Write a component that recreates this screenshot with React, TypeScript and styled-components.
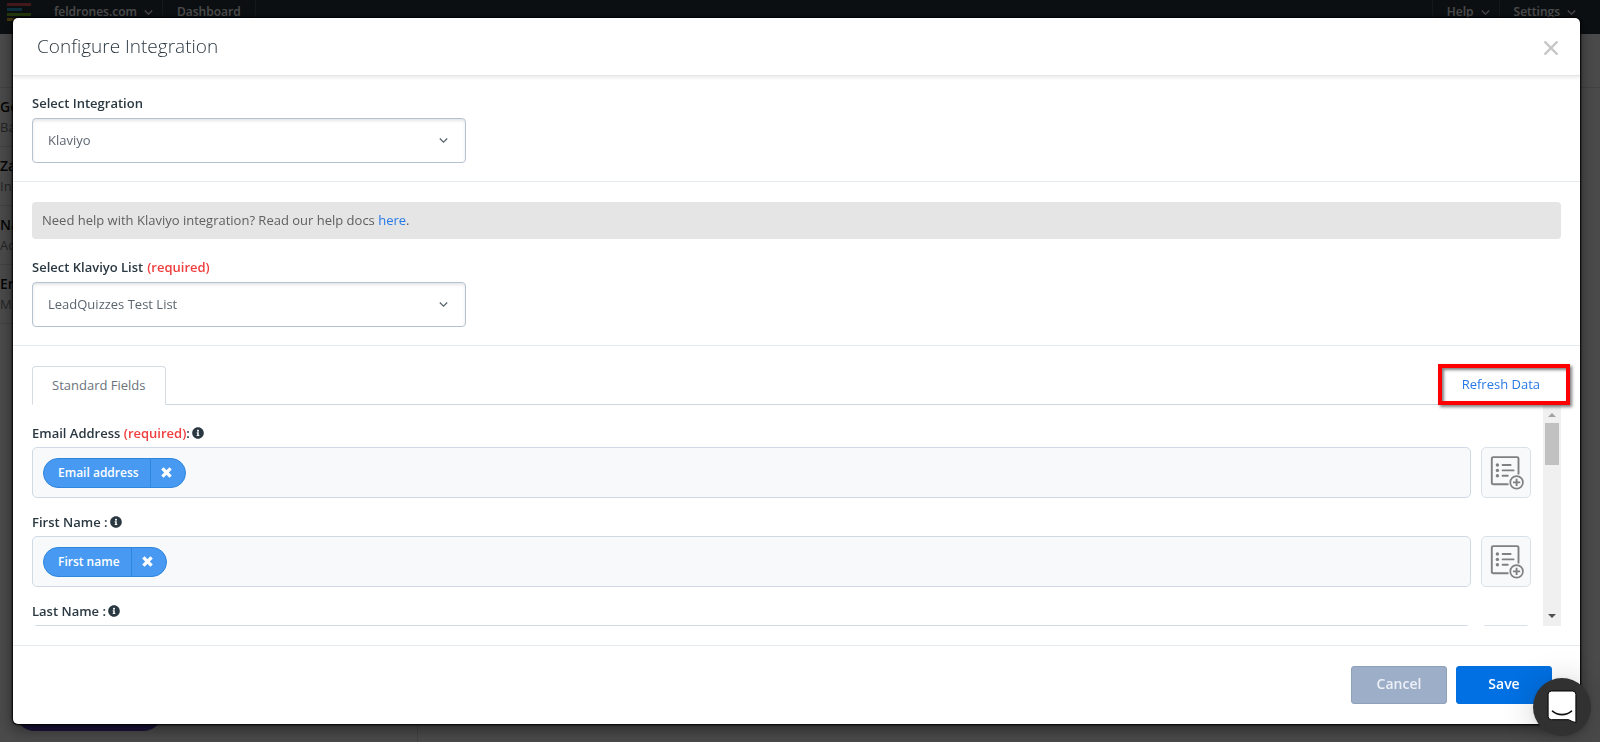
import React from "react";
import styled, { createGlobalStyle } from "styled-components";
import { FaInfoCircle } from "react-icons/fa";

const GlobalStyle = createGlobalStyle`
  *, *::before, *::after { box-sizing: border-box; }
  body {
    margin: 0;
    background: #f8f8f8;
    color: #56626a;
    font-family: "Open Sans", "Noto Sans", sans-serif;
    font-size: 13px;
    line-height: 18px;
    overflow: hidden;
  }
  button, select { font: inherit; }
  button { cursor: pointer; }
`;

/* ---------- page behind the dialog ---------- */

const Page = styled.div`
  display: flex;
  flex-direction: column;
  height: 100vh;
`;

const NavBar = styled.nav`
  display: flex;
  flex: none;
  align-items: flex-start;
  height: 34px;
  padding-right: 15px;
  background: #27343e;
`;

const Logo = styled.svg`
  flex: none;
  width: 24px;
  height: 19px;
  margin: 3px 9px 0 7px;
`;

const NavLink = styled.a<{ $menu?: boolean; $side?: "left" | "right" }>`
  display: flex;
  align-items: center;
  gap: 7px;
  height: 34px;
  padding: 0 ${(p) => (p.$menu ? 9 : 14)}px 10px 14px;
  border: 0 solid #45525c;
  border-${(p) => (p.$side === "right" ? "left" : "right")}-width: 1px;
  color: #fff;
  font-size: 12px;
  font-weight: 600;
  text-decoration: none;
`;

const NavSpacer = styled.div`
  flex: 1;
`;

const SubHeader = styled.div`
  flex: none;
  height: 54px;
  border-bottom: 1px solid #dadada;
`;

const Columns = styled.div`
  display: flex;
  flex: 1;
`;

const Sidebar = styled.aside`
  display: flex;
  flex-direction: column;
  justify-content: space-between;
  width: 418px;
  border-right: 1px solid #dadada;
`;

const LeadList = styled.ul`
  margin: 0;
  padding: 0;
  list-style: none;
`;

const Lead = styled.li`
  height: 59px;
  padding-top: 9px;
  border-bottom: 1px solid #dadada;
  color: #777;
  line-height: 20px;

  strong {
    display: block;
    color: #111;
    font-size: 14px;
    font-weight: 600;
  }
`;

const PurplePill = styled.div`
  width: 148px;
  height: 40px;
  margin: 0 0 11px 15px;
  border-radius: 20px;
  background: #5a3fbf;
`;

/* ---------- dialog ---------- */

const Overlay = styled.div`
  position: fixed;
  inset: 0;
  display: flex;
  padding: 18px 20px 18px 13px;
  background: rgba(0, 0, 0, 0.7);
`;

const Dialog = styled.section`
  display: flex;
  flex: 1;
  flex-direction: column;
  min-width: 0;
  border-radius: 5px;
  background: #fff;
  box-shadow: 0 0 2px 1px #000, 0 5px 15px rgba(0, 0, 0, 0.5);
`;

const DialogHeader = styled.header`
  display: flex;
  flex: none;
  align-items: center;
  justify-content: space-between;
  height: 58px;
  padding: 0 21px 2px 24px;
  border-bottom: 1px solid #e4e6e8;
  box-shadow: 0 2px 3px rgba(0, 0, 0, 0.08);
`;

const Title = styled.h1`
  margin: 0;
  color: #2b3740;
  font-size: 19px;
  font-weight: 300;
  line-height: 26px;
`;

const CloseButton = styled.button`
  display: flex;
  padding: 5px 0 0;
  border: 0;
  background: none;
  color: #c8c8c8;
`;

const Section = styled.div<{ $compact?: boolean }>`
  flex: none;
  padding: ${(p) => (p.$compact ? 18 : 20)}px 19px 18px;
  border-bottom: 1px solid #e4eaf0;
`;

const Label = styled.label`
  display: flex;
  align-items: center;
  gap: 4px;
  color: #2a3842;
  font-weight: 600;
`;

const FieldLabel = styled(Label).attrs({ as: "div" })`
  gap: 2px;
`;

const Required = styled.span`
  color: #f03e3e;
`;

const SelectBox = styled.div`
  display: grid;
  align-items: center;
  width: 434px;
  max-width: 100%;
  margin-top: 6px;

  > * { grid-area: 1 / 1; }
  > svg {
    justify-self: end;
    margin-right: 18px;
    pointer-events: none;
  }
`;

const Select = styled.select`
  width: 100%;
  height: 45px;
  padding: 0 40px 2px 15px;
  border: 1px solid #b5c3d1;
  border-radius: 4px;
  appearance: none;
  background: #fff;
  box-shadow: inset 0 2px 3px rgba(0, 0, 0, 0.1);
  color: #5c6670;
`;

const HelpNote = styled.p`
  margin: 0 0 19px;
  padding: 9px 10px 10px;
  border-radius: 4px;
  background: #e5e5e5;
  color: #606060;
`;

const TextLink = styled.a`
  color: #2779e6;
  text-decoration: none;
`;

const FieldsSection = styled.div`
  display: flex;
  flex: 1;
  flex-direction: column;
  min-height: 0;
  padding: 20px 19px 19px;
  border-bottom: 1px solid #e4eaf0;
`;

const TabBar = styled.div`
  display: flex;
  flex: none;
  justify-content: space-between;
  height: 39px;
  border-bottom: 1px solid #ccd6df;
`;

const Tab = styled.button`
  height: 39px;
  padding: 0 19px 2px;
  border: 1px solid #d5dbe0;
  border-bottom-color: #fff;
  border-radius: 4px 4px 0 0;
  background: #fff;
  color: #6a737b;
`;

const RefreshArea = styled.div`
  position: relative;
  display: flex;
  align-items: center;
  padding: 0 21px 3px 24px;
`;

const Highlight = styled.span`
  position: absolute;
  inset: -2px -9px -1px 0;
  z-index: 1;
  border: 4px solid #fe0000;
  box-shadow: 2px 2px 3px rgba(0, 0, 0, 0.5), inset 2px 2px 3px rgba(0, 0, 0, 0.5);
  pointer-events: none;
`;

const FieldsViewport = styled.div`
  display: flex;
  flex: 1;
  gap: 12px;
  min-height: 0;
`;

const FieldList = styled.div`
  flex: 1;
  min-width: 0;
  padding-top: 19px;
  overflow-y: auto;
  scrollbar-width: none;
`;

const FieldGroup = styled.div`
  margin-bottom: 15px;
`;

const FieldRow = styled.div`
  display: flex;
  gap: 10px;
  margin-top: 5px;
`;

const FieldBox = styled.div`
  display: flex;
  flex: 1;
  align-items: center;
  height: 51px;
  padding: 0 10px;
  border: 1px solid #cfdae4;
  border-radius: 5px;
  background: #f7f9fb;
`;

const Chip = styled.span`
  display: flex;
  height: 30px;
  border: 1px solid #2f86dd;
  border-radius: 15px;
  background: #4799f1;
  color: #fff;
  font-size: 12px;
  font-weight: 600;
  line-height: 28px;
`;

const ChipText = styled.span`
  padding: 0 11px 0 14px;
`;

const ChipRemove = styled.button`
  display: flex;
  align-items: center;
  width: 35px;
  padding: 0 0 0 10px;
  border: 0;
  border-left: 1px solid #2f86dd;
  background: none;
  color: #fff;
`;

const InsertButton = styled.button`
  display: flex;
  align-items: center;
  justify-content: center;
  width: 50px;
  height: 51px;
  padding: 0 0 0 2px;
  border: 1px solid #d8e1ea;
  border-radius: 5px;
  background: #f7f9fb;
  color: #808080;
`;

const ScrollTrack = styled.div`
  display: flex;
  flex-direction: column;
  align-items: center;
  width: 18px;
  background: #f0f0f0;
`;

const ScrollThumb = styled.div`
  width: 14px;
  height: 42px;
  margin-bottom: auto;
  background: #c1c1c1;
`;

const ScrollArrow = styled.svg`
  flex: none;
  width: 18px;
  height: 18px;
`;

const DialogFooter = styled.footer`
  display: flex;
  flex: none;
  justify-content: flex-end;
  gap: 9px;
  padding: 20px 28px 20px;
`;

const ActionButton = styled.button<{ $primary?: boolean }>`
  width: 96px;
  height: 38px;
  padding: 0 0 3px;
  border: 1px solid ${(p) => (p.$primary ? "#006fe0" : "#8ea1b9")};
  border-radius: 3px;
  background: ${(p) => (p.$primary ? "#0070e2" : "#9daec8")};
  color: ${(p) => (p.$primary ? "#fff" : "#edf1f7")};
  font-size: 14px;
  font-weight: 600;
`;

const ChatLauncher = styled.button`
  position: fixed;
  right: 9px;
  bottom: 6px;
  display: flex;
  align-items: center;
  justify-content: center;
  width: 58px;
  height: 58px;
  padding: 0;
  border: 0;
  border-radius: 50%;
  background: #313131;
  box-shadow: 0 1px 6px rgba(0, 0, 0, 0.08), 0 2px 32px rgba(0, 0, 0, 0.18);
`;

/* ---------- icons ---------- */

const Chevron = () => (
  <svg width="9" height="9" viewBox="0 0 9 9" fill="none" stroke="currentColor" strokeWidth="1.2" aria-hidden>
    <path d="M0.8 2.5 4.5 6.2 8.2 2.5" />
  </svg>
);

const CrossIcon = () => (
  <svg width="16" height="16" viewBox="0 0 16 16" stroke="currentColor" strokeWidth="2.4" strokeLinecap="round" aria-hidden>
    <path d="M2.2 2.2 13.8 13.8M13.8 2.2 2.2 13.8" />
  </svg>
);

const RemoveIcon = () => (
  <svg width="11" height="11" viewBox="0 0 11 11" stroke="currentColor" strokeWidth="3.4" aria-hidden>
    <path d="M1.4 1.4 9.6 9.6M9.6 1.4 1.4 9.6" />
  </svg>
);

const InsertFieldIcon = () => (
  <svg width="34" height="34" viewBox="0 0 34 34" fill="none" stroke="currentColor" aria-hidden>
    <path strokeWidth="1.9" d="M18.5 28.3H3.2a1.4 1.4 0 0 1-1.4-1.4V2.5a1.4 1.4 0 0 1 1.4-1.4h23.9a1.4 1.4 0 0 1 1.4 1.4v16" />
    <g fill="currentColor" stroke="none">
      <circle cx="7.4" cy="9" r="1.7" />
      <circle cx="7.4" cy="14.4" r="1.7" />
      <circle cx="7.4" cy="19.8" r="1.7" />
    </g>
    <path strokeWidth="1.9" strokeLinecap="round" d="M12.6 9h8M12.6 14.4h11M12.6 19.8h5.2" />
    <circle cx="26.6" cy="26.4" r="6.3" strokeWidth="1.7" fill="#f7f9fb" />
    <path strokeWidth="1.9" d="M26.6 22.8v7.2M23 26.4h7.2" />
  </svg>
);

const ChatIcon = () => (
  <svg width="30" height="34" viewBox="0 0 30 34" aria-hidden>
    <path
      d="M4.5 1h21a3.4 3.4 0 0 1 3.4 3.4v28.2c-2.6-.6-5-1.5-7.3-2.9H4.5A3.4 3.4 0 0 1 1.1 26.3V4.4A3.4 3.4 0 0 1 4.5 1z"
      fill="#fff"
      stroke="#000"
      strokeWidth="1"
    />
    <path d="M5.5 21.2c5.2 4.6 13.8 4.6 19 0" fill="none" stroke="#111" strokeWidth="1.6" strokeLinecap="round" />
  </svg>
);

/* ---------- data ---------- */

const leads = [
  { name: "Ge", role: "Ba" },
  { name: "Za", role: "Int" },
  { name: "Na", role: "Ad" },
  { name: "Er", role: "Ma" },
];

const fields = [
  { label: "Email Address", required: true, value: "Email address" },
  { label: "First Name", required: false, value: "First name" },
  { label: "Last Name", required: false, value: "" },
];

export default function App() {
  return (
    <>
      <GlobalStyle />
      <Page>
        <NavBar>
          <Logo viewBox="0 0 24 19" aria-hidden>
            <path d="M0 1.5h24" stroke="#e0525c" strokeWidth="3" />
            <path d="M0 6.5h15" stroke="#2f9fd0" strokeWidth="3" />
            <path d="M0 11.5h24" stroke="#76b82a" strokeWidth="3" />
            <path d="M0 16.5h13" stroke="#e8b82a" strokeWidth="3" />
          </Logo>
          <NavLink href="#account" $menu>
            <span>feldrones.com</span>
            <Chevron />
          </NavLink>
          <NavLink href="#dashboard">Dashboard</NavLink>
          <NavSpacer />
          <NavLink href="#help" $menu $side="right">
            <span>Help</span>
            <Chevron />
          </NavLink>
          <NavLink href="#settings" $menu $side="right">
            <span>Settings</span>
            <Chevron />
          </NavLink>
        </NavBar>
        <SubHeader />
        <Columns>
          <Sidebar>
            <LeadList>
              {leads.map((lead) => (
                <Lead key={lead.name}>
                  <strong>{lead.name}</strong>
                  {lead.role}
                </Lead>
              ))}
            </LeadList>
            <PurplePill />
          </Sidebar>
        </Columns>
      </Page>

      <Overlay>
        <Dialog role="dialog" aria-modal="true" aria-labelledby="dialog-title">
          <DialogHeader>
            <Title id="dialog-title">Configure Integration</Title>
            <CloseButton aria-label="Close">
              <CrossIcon />
            </CloseButton>
          </DialogHeader>

          <Section $compact>
            <Label htmlFor="integration">Select Integration</Label>
            <SelectBox>
              <Select id="integration">
                <option>Klaviyo</option>
              </Select>
              <Chevron />
            </SelectBox>
          </Section>

          <Section>
            <HelpNote>
              Need help with Klaviyo integration? Read our help docs <TextLink href="#docs">here</TextLink>.
            </HelpNote>
            <Label htmlFor="list">
              Select Klaviyo List <Required>(required)</Required>
            </Label>
            <SelectBox>
              <Select id="list">
                <option>LeadQuizzes Test List</option>
              </Select>
              <Chevron />
            </SelectBox>
          </Section>

          <FieldsSection>
            <TabBar>
              <Tab>Standard Fields</Tab>
              <RefreshArea>
                <TextLink href="#refresh">Refresh Data</TextLink>
                <Highlight />
              </RefreshArea>
            </TabBar>
            <FieldsViewport>
              <FieldList>
                {fields.map((field) => (
                  <FieldGroup key={field.label}>
                    <FieldLabel>
                      {field.required ? (
                        <span>
                          {field.label} <Required>(required)</Required>:
                        </span>
                      ) : (
                        <span>{field.label} :</span>
                      )}
                      <FaInfoCircle size={12} />
                    </FieldLabel>
                    <FieldRow>
                      <FieldBox>
                        {field.value && (
                          <Chip>
                            <ChipText>{field.value}</ChipText>
                            <ChipRemove aria-label={`Remove ${field.value}`}>
                              <RemoveIcon />
                            </ChipRemove>
                          </Chip>
                        )}
                      </FieldBox>
                      <InsertButton aria-label={`Insert into ${field.label}`}>
                        <InsertFieldIcon />
                      </InsertButton>
                    </FieldRow>
                  </FieldGroup>
                ))}
              </FieldList>
              <ScrollTrack aria-hidden>
                <ScrollArrow viewBox="0 0 18 18">
                  <path d="M5 12h8L9 8z" fill="#a3a3a3" />
                </ScrollArrow>
                <ScrollThumb />
                <ScrollArrow viewBox="0 0 18 18">
                  <path d="M5 6h8L9 10z" fill="#505050" />
                </ScrollArrow>
              </ScrollTrack>
            </FieldsViewport>
          </FieldsSection>

          <DialogFooter>
            <ActionButton>Cancel</ActionButton>
            <ActionButton $primary>Save</ActionButton>
          </DialogFooter>
        </Dialog>
      </Overlay>

      <ChatLauncher aria-label="Open chat">
        <ChatIcon />
      </ChatLauncher>
    </>
  );
}
